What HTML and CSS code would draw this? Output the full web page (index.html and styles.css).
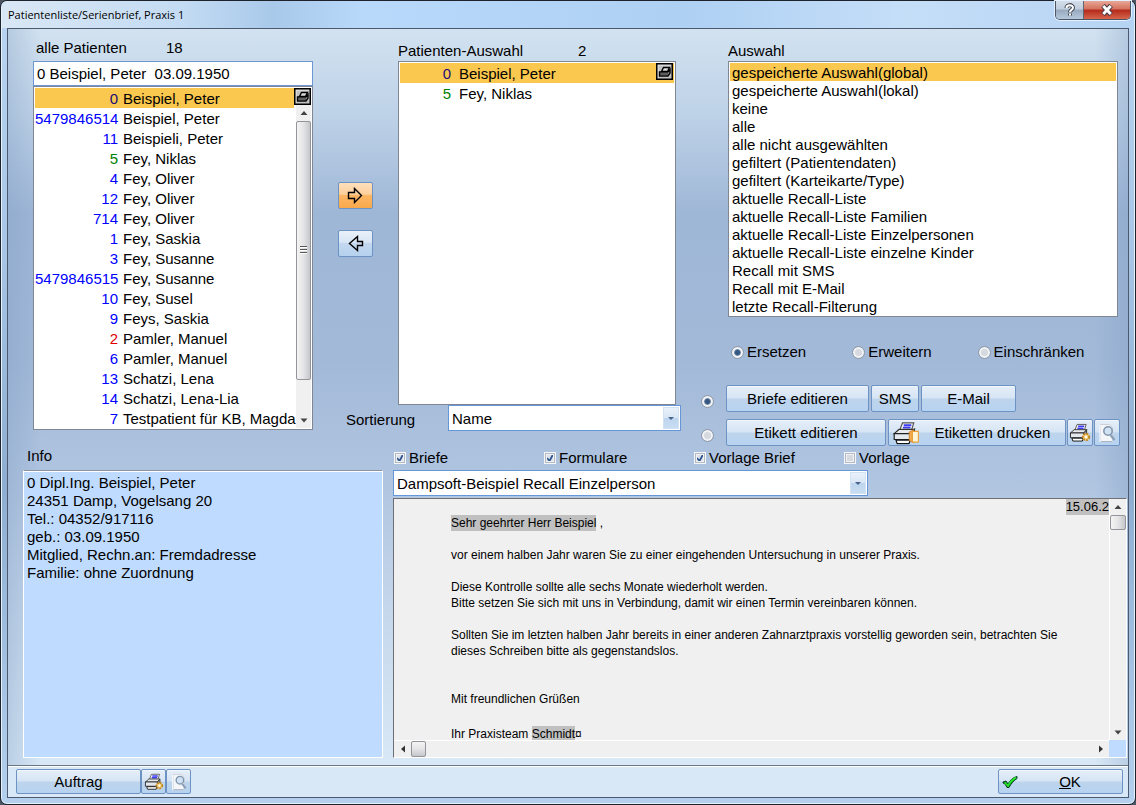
FILE: index.html
```html
<!DOCTYPE html>
<html lang="de">
<head>
<meta charset="utf-8">
<title>Patientenliste/Serienbrief, Praxis 1</title>
<link rel="stylesheet" href="styles.css">
</head>
<body>
<svg class="sprite" aria-hidden="true">
  <symbol id="mini-printer" viewBox="0 0 17 17">
    <rect x="1" y="1" width="15" height="15" fill="#c3c3c3"/>
    <path d="M2 15V2H15" fill="none" stroke="#eee"/>
    <path d="M7.500 4.500h6l-2 4H5.500z" fill="#ddd" stroke="#000" stroke-width="1.400"/>
    <path d="M3.500 9h8.500l2-2.500v3.500l-2 3h-8.500z" fill="#bbb" stroke="#000" stroke-width="1.400"/>
    <path d="M4 11h8" stroke="#000"/>
    <rect x=".75" y=".75" width="15.500" height="15.500" fill="none" stroke="#000" stroke-width="1.500"/>
  </symbol>
  <symbol id="printer" viewBox="0 0 22 20">
    <path d="M6 8L8.500 1.500H18L16 8z" fill="#fff" stroke="#555"/>
    <path d="M9.500 3.500h6.500M8.800 5.500h6.500" stroke="#3a3af0" stroke-width="1.600"/>
    <path d="M1.500 10.500L5.500 7h13l-3 3.500z" fill="#e6e9ee" stroke="#333"/>
    <path d="M1.500 10.500h14v5h-14z" fill="#e4e8ef" stroke="#222"/>
    <path d="M15.500 10.500l3-3.500v5l-3 3.500z" fill="#8d939e" stroke="#333"/>
    <path d="M3 16h12l-1 3H4z" fill="#fff" stroke="#111"/>
  </symbol>
  <symbol id="printer-label" viewBox="0 0 26 22">
    <use href="#printer" x="0" y="0" width="25" height="22"/>
    <path d="M16 10l4-2v12l-4-2z" fill="#f3a84a" stroke="#c77b20" stroke-width=".7"/>
    <path d="M19 9.500h5.500v10H19z" fill="#fff4d6" stroke="#e8a13c"/>
  </symbol>
  <symbol id="printer-gear" viewBox="0 0 22 20">
    <use href="#printer" x="0" y="0" width="21" height="19"/>
    <circle cx="17" cy="14" r="3.200" fill="#f5d079" stroke="#c48a26" stroke-width="2" stroke-dasharray="2 1"/>
    <circle cx="17" cy="14" r="1.200" fill="#fff"/>
  </symbol>
  <symbol id="preview" viewBox="0 0 20 20">
    <path d="M3.500 1.500h9l3 3v14h-12z" fill="#f4f6f9" stroke="#c9d0da"/>
    <path d="M3 2v17" stroke="#fff"/>
    <path d="M4 18.500h11" stroke="#aab3c0"/>
    <circle cx="11" cy="8" r="4.200" fill="#cfe3f5" stroke="#8294ab" stroke-width="1.500"/>
    <path d="M13.500 12l4 5" stroke="#8c9fb8" stroke-width="2.200"/>
  </symbol>
  <symbol id="tri-up" viewBox="0 0 16 16"><path d="M4.500 10L8 6l3.500 4z" fill="#444"/></symbol>
  <symbol id="tri-down" viewBox="0 0 16 16"><path d="M4.500 6.500h7L8 10.500z" fill="#444"/></symbol>
  <symbol id="tri-left" viewBox="0 0 16 16"><path d="M10 4.500v7L6 8z" fill="#333"/></symbol>
  <symbol id="tri-right" viewBox="0 0 16 16"><path d="M6 4.500v7L10 8z" fill="#333"/></symbol>
</svg>

<div class="window">
  <header class="titlebar">
    <h1 class="title">Patientenliste/Serienbrief, Praxis 1</h1>
    <div class="caption-buttons">
      <button class="cap cap-help" aria-label="Hilfe"><svg width="12" height="14" viewBox="0 0 12 14"><path d="M2.500 5C2.500 1.200 9 1.200 9 4.800C9 7 6 6.800 6 9.200M6 10.500v2" fill="none" stroke="#3f4651" stroke-width="4"/><path d="M2.500 5C2.500 1.500 9 1.500 9 4.800C9 7 6 6.800 6 9M6 10.600v2" fill="none" stroke="#fff" stroke-width="2"/></svg></button>
      <button class="cap cap-close" aria-label="Schließen"><svg width="14" height="12" viewBox="0 0 14 12"><path d="M3 1.500l8 9M11 1.500l-8 9" stroke="#4a3a44" stroke-width="5"/><path d="M3.300 2l7.400 8M10.700 2l-7.400 8" stroke="#fff" stroke-width="3"/></svg></button>
    </div>
  </header>

  <div class="client">
    <main class="main">
      <div class="top">
        <section class="all">
          <h2 class="heading"><span class="heading-all">alle Patienten</span><span>18</span></h2>
          <input class="search" type="text" aria-label="Patient suchen" value="0 Beispiel, Peter  03.09.1950">
          <div class="listbox">
            <ul class="rows wide-num" role="listbox" aria-label="alle Patienten">
              <li class="row selected" role="option" aria-selected="true"><span class="num">0</span><span>Beispiel, Peter</span></li>
              <li class="row" role="option"><span class="num">5479846514</span><span>Beispiel, Peter</span></li>
              <li class="row" role="option"><span class="num">11</span><span>Beispieli, Peter</span></li>
              <li class="row" role="option"><span class="num green">5</span><span>Fey, Niklas</span></li>
              <li class="row" role="option"><span class="num">4</span><span>Fey, Oliver</span></li>
              <li class="row" role="option"><span class="num">12</span><span>Fey, Oliver</span></li>
              <li class="row" role="option"><span class="num">714</span><span>Fey, Oliver</span></li>
              <li class="row" role="option"><span class="num">1</span><span>Fey, Saskia</span></li>
              <li class="row" role="option"><span class="num">3</span><span>Fey, Susanne</span></li>
              <li class="row" role="option"><span class="num">5479846515</span><span>Fey, Susanne</span></li>
              <li class="row" role="option"><span class="num">10</span><span>Fey, Susel</span></li>
              <li class="row" role="option"><span class="num">9</span><span>Feys, Saskia</span></li>
              <li class="row" role="option"><span class="num red">2</span><span>Pamler, Manuel</span></li>
              <li class="row" role="option"><span class="num">6</span><span>Pamler, Manuel</span></li>
              <li class="row" role="option"><span class="num">13</span><span>Schatzi, Lena</span></li>
              <li class="row" role="option"><span class="num">14</span><span>Schatzi, Lena-Lia</span></li>
              <li class="row" role="option"><span class="num">7</span><span>Testpatient für KB, Magda</span></li>
            </ul>
            <div class="list-side">
              <button class="mini" aria-label="Liste drucken"><svg width="17" height="17"><use href="#mini-printer"/></svg></button>
              <div class="vscroll">
                <svg width="16" height="16"><use href="#tri-up"/></svg>
                <div class="track"><div class="thumb thumb-list"><i class="grip"></i></div></div>
                <svg width="16" height="16"><use href="#tri-down"/></svg>
              </div>
            </div>
          </div>
        </section>

        <section class="chosen">
          <div class="chosen-body">
            <div class="arrows">
              <button class="arrow arrow-add" aria-label="Hinzufügen"><svg width="17" height="17" viewBox="0 0 17 17"><path d="M1.500 5.500h6v-4l7 7-7 7v-4h-6z" fill="none" stroke="#000" stroke-width="1.400"/></svg></button>
              <button class="arrow" aria-label="Entfernen"><svg width="17" height="17" viewBox="0 0 17 17"><path d="M15.500 6.500h-5v-5l-8 7 8 7v-5h5z" fill="none" stroke="#000" stroke-width="1.400"/></svg></button>
            </div>
            <div class="chosen-list">
              <h2 class="heading"><span class="heading-chosen">Patienten-Auswahl</span><span>2</span></h2>
              <div class="listbox grow">
                <ul class="rows narrow-num" role="listbox" aria-label="Patienten-Auswahl">
                  <li class="row selected" role="option" aria-selected="true"><span class="num">0</span><span>Beispiel, Peter</span><button class="mini push" aria-label="Auswahl drucken"><svg width="17" height="17"><use href="#mini-printer"/></svg></button></li>
                  <li class="row" role="option"><span class="num green">5</span><span>Fey, Niklas</span></li>
                </ul>
              </div>
            </div>
          </div>
          <div class="sort">
            <label class="sort-label" for="sort">Sortierung</label>
            <div class="combo"><select id="sort"><option>Name</option></select><span class="drop"></span></div>
          </div>
        </section>

        <section class="filter">
          <div class="filter-top">
            <h2 class="heading">Auswahl</h2>
            <div class="listbox">
              <ul class="rows compact" role="listbox" aria-label="Auswahl">
                <li class="row selected" role="option" aria-selected="true">gespeicherte Auswahl(global)</li>
                <li class="row" role="option">gespeicherte Auswahl(lokal)</li>
                <li class="row" role="option">keine</li>
                <li class="row" role="option">alle</li>
                <li class="row" role="option">alle nicht ausgewählten</li>
                <li class="row" role="option">gefiltert (Patientendaten)</li>
                <li class="row" role="option">gefiltert (Karteikarte/Type)</li>
                <li class="row" role="option">aktuelle Recall-Liste</li>
                <li class="row" role="option">aktuelle Recall-Liste Familien</li>
                <li class="row" role="option">aktuelle Recall-Liste Einzelpersonen</li>
                <li class="row" role="option">aktuelle Recall-Liste einzelne Kinder</li>
                <li class="row" role="option">Recall mit SMS</li>
                <li class="row" role="option">Recall mit E-Mail</li>
                <li class="row" role="option">letzte Recall-Filterung</li>
              </ul>
            </div>
            <div class="modes">
              <label class="opt"><input type="radio" name="mode" checked>Ersetzen</label>
              <label class="opt"><input type="radio" name="mode">Erweitern</label>
              <label class="opt"><input type="radio" name="mode">Einschränken</label>
            </div>
          </div>
          <div class="actions">
            <input type="radio" name="output" aria-label="Briefe" checked>
            <div class="action-row">
              <button class="btn w-letter">Briefe editieren</button>
              <button class="btn w-sms">SMS</button>
              <button class="btn w-mail">E-Mail</button>
            </div>
            <input type="radio" name="output" aria-label="Etiketten">
            <div class="action-row">
              <button class="btn w-label">Etikett editieren</button>
              <button class="btn btn-icon-text w-print"><svg width="28" height="24"><use href="#printer-label"/></svg><span>Etiketten drucken</span></button>
              <div class="pair">
                <button class="btn w-icon" aria-label="Druckeinstellungen"><svg width="22" height="20"><use href="#printer-gear"/></svg></button>
                <button class="btn w-icon" aria-label="Vorschau"><svg width="20" height="20"><use href="#preview"/></svg></button>
              </div>
            </div>
          </div>
        </section>
      </div>

      <div class="bottom">
        <section class="info">
          <h2 class="heading info-heading">Info</h2>
          <div class="info-box">
            <p>0 Dipl.Ing. Beispiel, Peter</p>
            <p>24351 Damp, Vogelsang 20</p>
            <p>Tel.: 04352/917116</p>
            <p>geb.: 03.09.1950</p>
            <p>Mitglied, Rechn.an: Fremdadresse</p>
            <p>Familie: ohne Zuordnung</p>
          </div>
        </section>
        <section class="template">
          <div class="checks">
            <label class="opt"><input type="checkbox" checked>Briefe</label>
            <label class="opt"><input type="checkbox" checked>Formulare</label>
            <label class="opt"><input type="checkbox" checked>Vorlage Brief</label>
            <label class="opt"><input type="checkbox">Vorlage</label>
          </div>
          <div class="combo combo-template"><select aria-label="Vorlage wählen"><option>Dampsoft-Beispiel Recall Einzelperson</option></select><span class="drop"></span></div>
          <div class="doc">
            <div class="page">
              <p class="date"><mark>15.06.2</mark></p>
              <p><mark>Sehr geehrter Herr Beispiel</mark> ,</p>
              <p class="gap">vor einem halben Jahr waren Sie zu einer eingehenden Untersuchung in unserer Praxis.</p>
              <p class="gap">Diese Kontrolle sollte alle sechs Monate wiederholt werden.<br>Bitte setzen Sie sich mit uns in Verbindung, damit wir einen Termin vereinbaren können.</p>
              <p class="gap">Sollten Sie im letzten halben Jahr bereits in einer anderen Zahnarztpraxis vorstellig geworden sein, betrachten Sie<br>dieses Schreiben bitte als gegenstandslos.</p>
              <p class="gap-large">Mit freundlichen Grüßen</p>
              <p class="gap sign">Ihr Praxisteam <mark>Schmidt</mark>¤</p>
            </div>
            <div class="vscroll doc-v">
              <svg width="16" height="16"><use href="#tri-up"/></svg>
              <div class="track"><div class="thumb thumb-doc"></div></div>
              <svg width="16" height="16"><use href="#tri-down"/></svg>
            </div>
            <div class="hscroll">
              <svg width="16" height="16"><use href="#tri-left"/></svg>
              <div class="track"><div class="thumb thumb-h"></div></div>
              <svg width="16" height="16"><use href="#tri-right"/></svg>
            </div>
            <div class="corner"></div>
          </div>
        </section>
      </div>
    </main>

    <footer class="footer">
      <div class="footer-left">
        <button class="btn w-order">Auftrag</button>
        <button class="btn w-foot" aria-label="Druckeinstellungen"><svg width="20" height="18"><use href="#printer-gear"/></svg></button>
        <button class="btn w-foot" aria-label="Vorschau"><svg width="18" height="18"><use href="#preview"/></svg></button>
      </div>
      <button class="btn btn-icon-text w-order"><svg width="16" height="14" viewBox="0 0 16 14"><path d="M1 7l3-1 2 3c2-4 5-6.500 9-7.500v2c-3 2-6 5-8 9H5C4 10.500 3 8.500 1 8z" fill="#0eb80e" stroke="#063a30"/><path d="M3 8l3 2.500c2-4 4-6 8-8" fill="none" stroke="#2ee52e" stroke-width="1.500"/></svg><span><u>O</u>K</span></button>
    </footer>
  </div>
</div>
</body>
</html>
```
FILE: styles.css
```css
* { box-sizing: border-box; }

body {
  margin: 0;
  background: #4b5662;
  color: #000;
  font: 15px/18px "Liberation Sans", Arial, sans-serif;
}

h1, h2, p, ul { margin: 0; padding: 0; font-weight: normal; }
ul { list-style: none; }
button, input, select { font: inherit; color: inherit; margin: 0; }
svg { display: block; flex: none; }
.sprite { position: absolute; width: 0; height: 0; }

.window {
  display: flex;
  flex-direction: column;
  min-height: 100vh;
  padding: 0 6px 6px;
  border: 1px solid #1d222b;
  border-radius: 7px;
  background: linear-gradient(#b9d5f2, #a9c6e6 30%, #8eadd0 60%, #b4d0ee);
  box-shadow: inset 0 0 0 1px #e4f2ff;
}

/* title bar */
.titlebar {
  display: flex;
  justify-content: space-between;
  height: 27px;
  margin: 0 -5px;
  padding: 0 3px 0 6px;
  border-radius: 6px 6px 0 0;
  background: linear-gradient(90deg, #d9e7f5, #c3dbf3 16%, #a9c9ea 24%, #b8d9fa 32%, #aed0f3 60%, #c5def8 80%, #b5d3f3);
}
.title { font: 11px/27px "Open Sans", "Noto Sans", sans-serif; }
.caption-buttons {
  display: flex;
  height: 19px;
  border: 1px solid #4b5564;
  border-top: 0;
  border-radius: 0 0 5px 5px;
  overflow: hidden;
  box-shadow: 0 0 0 1px #e2f0ff;
}
.cap { display: flex; align-items: center; justify-content: center; padding: 0; border: 0; }
.cap-help { width: 28px; border-right: 1px solid #5f6773; background: linear-gradient(#d5dee9, #c0cddd 45%, #98a9bd 50%, #b6c8dc); }
.cap-close { width: 46px; background: linear-gradient(#e8a797, #d4705c 45%, #b5281a 50%, #d5664c); }

/* client area */
.client {
  flex: 1;
  display: flex;
  flex-direction: column;
  border: 1px solid #4c5a70;
}
.main {
  flex: 1;
  display: flex;
  flex-direction: column;
  padding-bottom: 7px;
  background:
    linear-gradient(90deg, rgba(120, 150, 190, .3), transparent 3%, transparent 97%, rgba(120, 150, 190, .3)),
    linear-gradient(#d2e2f0, #bdd1e7 12%, #9fb7d7 25%, #a2b9d8 45%, #b0c5e0 62%, #c6d8ec 80%, #d8e8f6);
}
.top { display: flex; padding: 10px 8px 0 25px; }
.heading { display: flex; font-size: 15px; line-height: 18px; }

.listbox { display: flex; border: 1px solid #808793; padding: 1px; background: #fff; }
.grow { flex: 1; }
.rows { flex: 1; min-width: 0; }
.row { display: flex; gap: 8px; height: 20px; line-height: 22px; white-space: nowrap; }
.selected { background: #fac84e; }
.num { flex: none; text-align: right; color: #00f; }
.wide-num .num { width: 83px; }
.wide-num .row { gap: 5px; }
.narrow-num .num { width: 51px; }
.selected .num { color: #1c0a78; }
.num.green { color: #008000; }
.num.red { color: #e00000; }
.compact .row { height: 18px; line-height: 20px; padding-left: 2px; }
.mini { display: block; width: 17px; height: 17px; padding: 0; border: 0; background: none; }
.push { margin-left: auto; margin-right: 1px; }

/* all patients */
.all { flex: 280 1 0; min-width: 0; margin-right: 25px; }
.all .heading { padding-left: 3px; margin-bottom: 4px; }
.heading-all { width: 130px; }
.search {
  display: block;
  width: 100%;
  height: 25px;
  padding: 0 3px;
  border: 1px solid #6d97d3;
  background: #fff;
}
.list-side { display: flex; flex-direction: column; }

/* scroll bars */
.vscroll, .hscroll { display: flex; background: #f0f0f0; }
.vscroll { flex: 1; flex-direction: column; width: 15px; margin-left: 2px; }
.track { flex: 1; display: flex; }
.vscroll .track { flex-direction: column; }
.thumb {
  display: flex;
  align-items: center;
  justify-content: center;
  border: 1px solid #93959a;
  border-radius: 2px;
  background: linear-gradient(90deg, #f4f4f4, #e4e4e6 50%, #c6c7cb);
}
.thumb-list { height: 89%; }
.thumb-doc { height: 15px; }
.thumb-h { width: 15px; background: linear-gradient(#f4f4f4, #e4e4e6 50%, #c6c7cb); }
.grip { width: 7px; height: 8px; background: repeating-linear-gradient(#555 0 1px, #fff 1px 2px, transparent 2px 3px); }

/* selected patients */
.chosen { flex: 343 1 0; min-width: 0; display: flex; flex-direction: column; margin-right: 20px; }
.chosen-body { display: flex; height: 366px; padding: 3px 5px 0 0; }
.arrows { width: 60px; padding-top: 140px; }
.arrow {
  display: flex;
  align-items: center;
  justify-content: center;
  width: 35px;
  height: 27px;
  margin-bottom: 21px;
  padding: 0;
  border: 1px solid #6d93c4;
  border-radius: 2px;
  background: linear-gradient(#e9f1fa, #d9e6f5 45%, #c3d8ef 50%, #b5d1ee);
}
.arrow-add { background: linear-gradient(#fde0bd, #fdcf9b 45%, #fdb664 50%, #f9a94c); }
.chosen-list { flex: 1; min-width: 0; display: flex; flex-direction: column; }
.chosen-list .heading { margin-bottom: 1px; }
.heading-chosen { width: 180px; }
.sort { display: flex; align-items: center; padding-left: 8px; }
.sort-label { width: 102px; padding-top: 4px; }

.combo { position: relative; flex: 1; height: 26px; border: 1px solid #6496d8; background: #fff; }
.combo select {
  display: block;
  width: 100%;
  height: 24px;
  padding: 2px 20px 0 3px;
  border: 0;
  background: none;
  appearance: none;
}
.drop {
  position: absolute;
  top: 1px;
  right: 1px;
  bottom: 1px;
  width: 16px;
  border: 1px solid #d3e2f3;
  background: linear-gradient(#e9f1fa, #d9e6f5 48%, #bdd5ee 52%, #c8ddf3);
  pointer-events: none;
}
.drop::after {
  content: "";
  position: absolute;
  top: 9px;
  left: 4px;
  border: 3px solid transparent;
  border-top-color: #49648c;
}

/* selection filter */
.filter { flex: 419 1 0; min-width: 0; }
.filter-top { padding: 3px 2px 0 27px; }
.filter-top .heading { margin-bottom: 1px; }
.modes { display: flex; gap: 46px; padding: 26px 0 0 3px; }
.opt { display: flex; align-items: center; gap: 3px; white-space: nowrap; }

input[type="radio"], input[type="checkbox"] {
  appearance: none;
  flex: none;
  width: 13px;
  height: 13px;
  border: 1px solid #8c98a8;
  background: #d6dae0;
  box-shadow: inset 0 0 0 2px #f0f2f5;
}
input[type="radio"] { border-radius: 50%; }
input[type="radio"]:checked { background: radial-gradient(#35567f 0 2px, #6e88a8 3px, #dfe4ea 4px); }
input[type="checkbox"] {
  width: 12px;
  height: 12px;
  border-color: #f4f6f8;
  box-shadow: inset 0 0 0 1px #b4bac4, inset 0 0 0 2px #f0f2f5;
}
input[type="checkbox"]:checked {
  background: #dde2ea url("data:image/svg+xml,%3Csvg xmlns='http://www.w3.org/2000/svg' viewBox='0 0 10 10'%3E%3Cpath d='M2 5l2.500 3L8 1.500' fill='none' stroke='%232f568f' stroke-width='1.800'/%3E%3C/svg%3E") center / 10px 10px;
}

.actions {
  display: grid;
  grid-template-columns: 13px 1fr;
  gap: 7px 12px;
  align-items: center;
  padding-top: 24px;
}
.actions > input { margin-top: 5px; }
.action-row { display: flex; gap: 2px; }
.pair { display: flex; gap: 1px; margin-left: -1px; }
.btn {
  display: flex;
  align-items: center;
  justify-content: center;
  height: 27px;
  padding: 0;
  border: 1px solid #6d93c4;
  border-radius: 2px;
  background: linear-gradient(#e6eff9, #d6e4f4 48%, #bdd4ec 52%, #b7d3f1);
  box-shadow: inset 0 1px 0 #f0f6fc;
  white-space: nowrap;
}
.w-letter { width: 143px; }
.w-sms { width: 48px; }
.w-mail { width: 95px; }
.w-label { width: 160px; }
.w-print { width: 178px; }
.w-icon { width: 26px; }
.w-order { width: 125px; }
.w-foot { width: 25px; }
.btn-icon-text { justify-content: flex-start; padding-left: 3px; }
.btn-icon-text span { flex: 1; text-align: center; }

/* lower half */
.bottom { flex: 1; display: flex; gap: 10px; padding: 1px 1px 0 15px; }
.info { flex: 360 1 0; min-width: 0; display: flex; flex-direction: column; }
.info-heading { padding-left: 4px; margin-bottom: 5px; }
.info-box {
  flex: 1;
  padding: 3px;
  border: 1px solid #fff;
  border-top-color: #8793a5;
  background: #bfdbff;
  box-shadow: inset 0 1px 0 #fff;
}
.template { flex: 734 1 0; min-width: 0; display: flex; flex-direction: column; }
.checks { display: grid; grid-template-columns: repeat(4, 150px); padding: 2px 0 3px 1px; }
.combo-template { flex: none; width: 475px; margin-bottom: 2px; }
.doc {
  flex: 1;
  min-height: 200px;
  display: grid;
  grid-template-columns: minmax(0, 1fr) 17px;
  grid-template-rows: minmax(0, 1fr) 17px;
  border: 1px solid #fff;
  border-top-color: #6d6f75;
  border-left-color: #6d6f75;
  background: #f0f0f0;
}
.page {
  height: 0;
  min-height: 100%;
  padding-left: 57px;
  overflow: hidden;
  font-size: 12px;
  line-height: 16px;
  white-space: nowrap;
}
.page mark { display: inline-block; height: 16px; background: #c0c0c0; color: #000; }
.date { text-align: right; font-size: 13px; }
.gap { margin-top: 16px; }
.gap-large { margin-top: 32px; }
.sign { padding-top: 3px; }
.hscroll { border-top: 1px solid #fff; padding-left: 1px; }
.doc-v { border-left: 1px solid #fff; margin: 0; width: auto; }
.corner { background: #bfdbff; }

/* footer */
.footer {
  display: flex;
  justify-content: space-between;
  padding: 3px 5px 3px 8px;
  border-top: 1px solid #6a7585;
  background: #d9e8f6;
  box-shadow: inset 0 1px 0 #fff;
}
.footer .btn { height: 25px; }
.footer-left { display: flex; }
```
